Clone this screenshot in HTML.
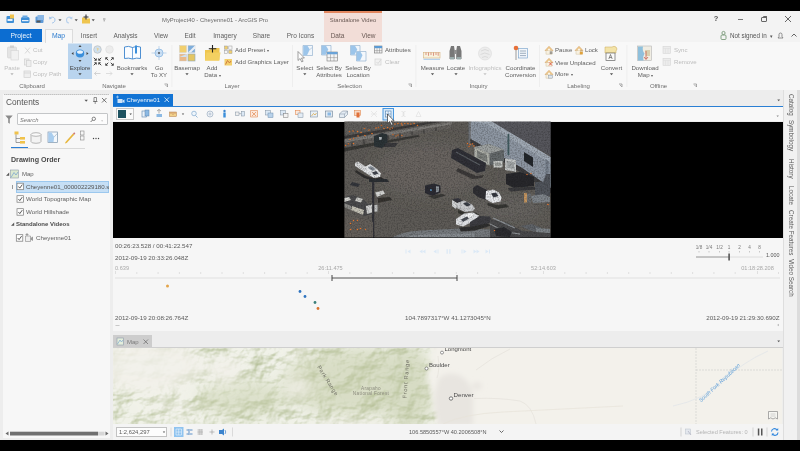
<!DOCTYPE html>
<html>
<head>
<meta charset="utf-8">
<title>ArcGIS Pro</title>
<style>
html,body{margin:0;padding:0;}
body{width:800px;height:451px;overflow:hidden;background:#000;position:relative;font-family:"Liberation Sans",sans-serif;color:#555;}
#wrap{position:absolute;left:-10px;top:-10px;width:820px;height:471px;background:#000;filter:blur(0.35px);}
#app{position:absolute;left:10px;top:10px;width:800px;height:451px;}
#bg{position:absolute;left:-10px;top:11px;width:820px;height:429px;background:#efefef;}
.t{position:absolute;white-space:nowrap;font-size:6.1px;line-height:8px;height:8px;margin-top:-4px;color:#606060;}
.c{transform:translateX(-50%);text-align:center;}
.dis{color:#bdbdbd !important;}
.a{position:absolute;}
.b{font-weight:bold;}
svg{position:absolute;overflow:visible;}
.car{position:absolute;font-size:4px;line-height:4px;color:#555;transform:translateX(-50%);}
</style>
</head>
<body>
<div id="wrap"><div id="app">
<div id="bg"></div>
<!-- ===== title bar ===== -->
<div class="a" style="left:0;top:11px;width:800px;height:31px;background:#f3f3f3;"></div>
<div class="a" style="left:0;top:42px;width:800px;height:47.500px;background:#f8f8f8;"></div>
<div class="a" style="left:0;top:89.500px;width:800px;height:0.800px;background:#dcdcdc;"></div>
<!-- context tab -->
<div class="a" style="left:324px;top:11px;width:58px;height:31px;background:#f2ddd7;"></div>
<div class="a" style="left:324px;top:11px;width:58px;height:1.5px;background:#e2875f;"></div>
<div class="t c" style="left:353px;top:20px;font-size:5.9px;color:#6a5a55;">Standalone Video</div>
<div class="t" style="left:162px;top:20px;font-size:5.9px;color:#6b6b6b;">MyProject40 - Cheyenne01 - ArcGIS Pro</div>
<!-- quick access icons -->
<svg style="left:0;top:11px;" width="120" height="18">
  <g>
    <rect x="6.5" y="5" width="7.5" height="7" rx="1" fill="#3f8fd6"/><rect x="10" y="3.5" width="4" height="4" fill="#f0c24b"/><rect x="7.5" y="8" width="5" height="2" fill="#e8f1fb"/>
    <rect x="21" y="6" width="8.5" height="6" rx="1.5" fill="#3f8fd6"/><rect x="22.5" y="4.5" width="5" height="2.5" fill="#6aa9e2"/><rect x="22" y="9" width="6.5" height="1.2" fill="#e8f1fb"/>
    <rect x="35.5" y="5.5" width="8" height="6.5" rx="1" fill="#5d9ad8"/><rect x="37.5" y="4" width="6.5" height="5" fill="#8bb7e4"/><rect x="36.5" y="9.5" width="4" height="2" fill="#555"/>
    <path d="M50 7 C52 5.5 55 6 55 9 C55 11 53 12 52 12" stroke="#a3c5ea" stroke-width="1" fill="none"/><path d="M49 5.5 L49.3 8.5 L52 7.5Z" fill="#a3c5ea"/>
    <path d="M71.500 7 C69.500 5.500 66.500 6 66.500 9 C66.500 11 68 12 69 12" stroke="#b9d2ee" stroke-width="1.1" fill="none"/><path d="M72.500 5.500 L72.200 8.500 L69.500 7.500Z" fill="#b9d2ee"/>
    <path d="M58.4 8.3 h3.200 l-1.600 2z M74.6 8.3 h3.200 l-1.600 2z M91.6 8.3 h3.200 l-1.600 2z" fill="#555"/>
    <path d="M82 6.500 h3 l1 1 h4 v5 h-8z" fill="#efc54f"/><path d="M86 3.500 v5 M83.500 6 h5" stroke="#333" stroke-width="1.100"/>
    <path d="M103 8 h2.500 M103.600 9.800 h1.300" stroke="#666" stroke-width="0.700"/>
  </g>
</svg>
<!-- window controls -->
<div class="t c" style="left:716px;top:18.500px;font-size:7.500px;color:#555;font-weight:bold;">?</div>
<div class="a" style="left:737.500px;top:18.500px;width:5.500px;height:1px;background:#777;"></div>
<div class="a" style="left:761px;top:16.500px;width:3.500px;height:3.500px;border:0.8px solid #666;border-radius:1px;"></div><div class="a" style="left:762.500px;top:15.500px;width:3.500px;height:3.500px;border-top:0.8px solid #666;border-right:0.8px solid #666;border-radius:1px;"></div>
<svg style="left:784px;top:15px;" width="8" height="8"><path d="M1 1 L7 7 M7 1 L1 7" stroke="#555" stroke-width="0.9"/></svg>
<!-- tabs -->
<div class="a" style="left:0;top:29px;width:42px;height:12.500px;background:#0c6dd1;"></div>
<div class="t c" style="left:21px;top:36px;font-size:6.8px;color:#eaf3fc;">Project</div>
<div class="a" style="left:44.500px;top:28.500px;width:28px;height:14px;background:#f8f8f8;border:0.800px solid #dcdcdc;border-bottom:none;box-sizing:border-box;"></div>
<div class="t c" style="left:58.500px;top:36px;font-size:6.8px;color:#2d7ccf;">Map</div>
<div class="t c" style="left:89px;top:36px;font-size:6.5px;">Insert</div>
<div class="t c" style="left:125.500px;top:36px;font-size:6.5px;">Analysis</div>
<div class="t c" style="left:161px;top:36px;font-size:6.5px;">View</div>
<div class="t c" style="left:190px;top:36px;font-size:6.5px;">Edit</div>
<div class="t c" style="left:225px;top:36px;font-size:6.5px;">Imagery</div>
<div class="t c" style="left:261.500px;top:36px;font-size:6.5px;">Share</div>
<div class="t c" style="left:300.500px;top:36px;font-size:6.5px;">Pro Icons</div>
<div class="t c" style="left:337.500px;top:36px;font-size:6.5px;color:#6a5a55;">Data</div>
<div class="t c" style="left:368.500px;top:36px;font-size:6.5px;color:#6a5a55;">View</div>
<!-- sign in -->
<svg style="left:719px;top:30px;" width="10" height="11"><circle cx="4.500" cy="3" r="1.600" fill="none" stroke="#6b8f6b" stroke-width="0.800"/><rect x="2" y="5" width="5" height="4.500" rx="1" fill="none" stroke="#6b8f6b" stroke-width="0.800"/></svg>
<div class="t" style="left:730px;top:35.500px;font-size:6.300px;color:#555;">Not signed in&nbsp;&nbsp;<span style="font-size:4.500px;">&#9662;</span></div>
<svg style="left:775px;top:30px;" width="24" height="11"><path d="M3 8 h5 l-1 -1.500 v-2 a1.500 1.500 0 0 0 -3 0 v2z" fill="none" stroke="#666" stroke-width="0.700"/><path d="M16.500 6.500 l2.500 -2.500 l2.500 2.500" fill="none" stroke="#555" stroke-width="0.900"/></svg>
<!-- ===== ribbon body ===== -->
<!-- Clipboard -->
<svg style="left:0;top:42px;" width="800" height="48">
  <!-- paste -->
  <rect x="7.500" y="5" width="9" height="11" rx="1" fill="#e4e4e4" stroke="#d2d2d2" stroke-width="0.600"/><rect x="10" y="3.500" width="4" height="2.500" fill="#d0d0d0"/><rect x="11" y="8.500" width="7.500" height="9.500" fill="#f1f1f1" stroke="#d4d4d4" stroke-width="0.600"/>
  <path d="M10.4 31.3 h3.200 l-1.600 2z" fill="#b5b5b5"/>
  <!-- cut/copy/path icons -->
  <path d="M25 5.500 l5 6 M30 5.500 l-5 6" stroke="#d0d0d0" stroke-width="0.800"/>
  <rect x="24.500" y="17" width="4.500" height="6" fill="#efefef" stroke="#d0d0d0" stroke-width="0.700"/><rect x="26.500" y="18.500" width="4.500" height="6" fill="#efefef" stroke="#d0d0d0" stroke-width="0.700"/>
  <rect x="24" y="29" width="6.500" height="6.500" fill="#efefef" stroke="#d0d0d0" stroke-width="0.700"/><path d="M24 31 h6.500" stroke="#d0d0d0" stroke-width="0.700"/>
  <!-- explore -->
  <rect x="68" y="1.500" width="24" height="35.500" fill="#b9d4ee"/>
  <ellipse cx="80" cy="11.500" rx="4.200" ry="4" fill="#3b8fdb"/><ellipse cx="80" cy="10" rx="3" ry="1.800" fill="#e9f3fc"/>
  <path d="M78.500 5 h3 l-1.500 -2z M78.500 18 h3 l-1.500 2z M73.500 10 v3 l-2 -1.500z M86.500 10 v3 l2 -1.500z" fill="#444"/>
  <path d="M78.4 31.3 h3.200 l-1.600 2z" fill="#444"/>
  <!-- navigate small icons -->
  <circle cx="97.500" cy="7.500" r="3.800" fill="#cfe0ee" stroke="#b5b5b5" stroke-width="0.600"/><path d="M96.500 5.500 l2.500 1 l-1.500 3z" fill="#e6cf9a"/>
  <circle cx="109.500" cy="7.500" r="3.800" fill="#ececec" stroke="#dcdcdc" stroke-width="0.600"/>
  <g stroke="#444" stroke-width="0.800" fill="none">
    <g transform="translate(97.500,19.500) scale(1.250) translate(-97.500,-19.500)"><path d="M94.500 16.500 l2 2 M96.500 17 v1.500 h-1.500 M100.500 16.500 l-2 2 M98.500 17 v1.500 h1.500 M94.500 22.500 l2 -2 M96.500 22 v-1.500 h-1.500 M100.500 22.500 l-2 -2 M98.500 22 v-1.500 h1.500"/></g>
    <g transform="translate(109.500,19.500) scale(1.250) translate(-109.500,-19.500)"><path d="M108.500 18.500 l-2 -2 M106.500 18 v-1.500 h1.500 M110.500 18.500 l2 -2 M112.500 18 v-1.500 h-1.500 M108.500 20.500 l-2 2 M106.500 21 v1.500 h1.500 M110.500 20.500 l2 2 M112.500 21 v1.500 h-1.500"/></g>
  </g>
  <path d="M100.500 31.500 h-6 m2 -2 l-2 2 l2 2" stroke="#c9c9c9" stroke-width="0.800" fill="none"/>
  <path d="M106 31.500 h6 m-2 -2 l2 2 l-2 2" stroke="#d5d5d5" stroke-width="0.800" fill="none"/>
  <!-- bookmarks -->
  <path d="M124.500 5 q4 -1.500 8 0.500 q4 -2 8 -0.500 v11.500 q-4 -1 -8 0.500 q-4 -1.500 -8 -0.500z" fill="#fafcff" stroke="#3b83cd" stroke-width="0.900"/><path d="M132.500 5.500 v11.500" stroke="#3b83cd" stroke-width="0.700"/><rect x="135" y="3.500" width="2" height="8" fill="#3b8fdb"/>
  <path d="M130.4 31.3 h3.200 l-1.600 2z" fill="#555"/>
  <!-- go to xy -->
  <circle cx="159" cy="11" r="4" fill="#cfe2f5" stroke="#7fb0df" stroke-width="0.700"/><path d="M159 4 v14 M151.500 11 h15" stroke="#a9c7e6" stroke-width="0.700"/><circle cx="159" cy="11" r="0.900" fill="#444"/>
  <!-- basemap -->
  <rect x="179.500" y="3.500" width="7" height="7" fill="#f1cf6e" stroke="#c9c9c9" stroke-width="0.400"/><rect x="188" y="3.500" width="7" height="7" fill="#7faedb" stroke="#c9c9c9" stroke-width="0.400"/><path d="M188 10.500 l7 -7 v3 l-4 4z" fill="#e8eef5"/>
  <rect x="179.500" y="12" width="7" height="7" fill="#e9b98a" stroke="#c9c9c9" stroke-width="0.400"/><path d="M179.500 15 l7 -3 v3z" fill="#cfe0f0"/><rect x="188" y="12" width="7" height="7" fill="#e4c663" stroke="#8aa6c0" stroke-width="0.600"/>
  <path d="M185.4 31.3 h3.200 l-1.600 2z" fill="#555"/>
  <!-- add data -->
  <path d="M205 8 h5 l1.500 -2 h8 v12.500 h-14.500z" fill="#efc64f"/><path d="M205 18.500 l1.500 -8 h14 l-1.500 8z" fill="#f3d061"/><path d="M212.500 3 v7.500 M208.800 6.800 h7.500" stroke="#222" stroke-width="1.100"/>
  <!-- add preset / graphics -->
  <rect x="224.500" y="4" width="3.200" height="3.200" fill="#f1cf6e" stroke="#999" stroke-width="0.500"/><rect x="228.800" y="4" width="3.200" height="3.200" fill="#f6f6f6" stroke="#999" stroke-width="0.500"/><rect x="224.500" y="8.300" width="3.200" height="3.200" fill="#f6f6f6" stroke="#999" stroke-width="0.500"/><rect x="228.800" y="8.300" width="3.200" height="3.200" fill="#f1cf6e" stroke="#999" stroke-width="0.500"/>
  <path d="M224.500 17 h7.500 v6.500 h-7.500z" fill="#f3cf6b"/><path d="M225.500 22.500 l2 -4 l2 2.500 l1.500 -2" stroke="#c66a3a" stroke-width="0.800" fill="none"/>
  <!-- select -->
  <path d="M303 3.500 h9.500 v10 h-9.500z" fill="#f1f6fb" stroke="#88a9c9" stroke-width="0.600"/><path d="M303.300 3.800 h4.200 l2.300 3.700 l-2.800 5.700 h-3.700z" fill="#9cc5ea"/><path d="M309.800 7.500 l2.500 -2" stroke="#88a9c9" stroke-width="0.500"/>
  <path d="M298 9.500 v9 l2.100 -2 l1.600 3.400 l1.400 -0.600 l-1.600 -3.300 h2.900z" fill="#fdfdfd" stroke="#666" stroke-width="0.600"/>
  <path d="M303.2 31.3 h3.200 l-1.600 2z" fill="#555"/>
  <!-- select by attributes -->
  <path d="M321.500 3.500 h9.500 v9.500 h-9.500z" fill="#f1f6fb" stroke="#88a9c9" stroke-width="0.600"/><path d="M321.800 3.800 h4.200 l2.300 3.700 l-2.800 5.200 h-3.700z" fill="#9cc5ea"/><rect x="327" y="10" width="10.500" height="9" fill="#f4f4f4" stroke="#7d7d7d" stroke-width="0.600"/><rect x="327" y="10" width="10.500" height="2.300" fill="#6aa3d8"/><path d="M330.500 12.300 v6.700 M334 12.300 v6.700 M327 15.600 h10.500" stroke="#8e8e8e" stroke-width="0.500"/>
  <!-- select by location -->
  <path d="M350.500 3.500 h9.500 v9.500 h-9.500z" fill="#f1f6fb" stroke="#88a9c9" stroke-width="0.600"/><path d="M350.800 3.800 h4.200 l2.300 3.700 l-2.800 5.200 h-3.700z" fill="#9cc5ea"/><path d="M356.500 9.500 h9.500 v9.500 h-9.500z" fill="#f4f8fc" stroke="#88a9c9" stroke-width="0.600"/><path d="M356.800 9.800 h3.700 l2 3.500 l-2.500 5.400 h-3.200z" fill="#9cc5ea"/>
  <!-- attributes / clear -->
  <rect x="374.500" y="4" width="7.500" height="7" fill="#f4f4f4" stroke="#777" stroke-width="0.600"/><rect x="374.500" y="4" width="7.500" height="2.200" fill="#5b9bd5"/><path d="M377 6.200 v4.800 M379.500 6.200 v4.800 M374.500 8.600 h7.500" stroke="#888" stroke-width="0.500"/>
  <rect x="375" y="17" width="6" height="6" fill="#f1f1f1" stroke="#d4d4d4" stroke-width="0.700"/><path d="M376.500 20 l1.500 1.500 l3 -4" stroke="#d0d0d0" stroke-width="0.700" fill="none"/>
  <!-- measure -->
  <rect x="423.500" y="10.500" width="16.500" height="5.500" fill="#f8f1dc" stroke="#d6b27e" stroke-width="0.600"/><path d="M426 10.500 v2.500 M428.500 10.500 v3.300 M431 10.500 v2.500 M433.500 10.500 v3.300 M436 10.500 v2.500 M438.200 10.500 v3.300" stroke="#c9574a" stroke-width="0.600"/><path d="M423.500 17.300 h16.500" stroke="#7fb2e2" stroke-width="0.700"/>
  <path d="M430.9 31.3 h3.200 l-1.600 2z" fill="#555"/>
  <!-- locate (binoculars) -->
  <path d="M449.500 9 l1.500 -5 h3 l0.800 5 v8 h-5.300z M461.500 9 l-1.500 -5 h-3 l-0.800 5 v8 h5.300z" fill="#787878"/><rect x="454" y="8" width="3" height="4" fill="#8f8f8f"/><rect x="450" y="15" width="4.300" height="2.500" fill="#9aa"/><rect x="456.700" y="15" width="4.300" height="2.500" fill="#9aa"/>
  <path d="M454.4 31.3 h3.200 l-1.600 2z" fill="#555"/><path d="M483.4 31.3 h3.200 l-1.600 2z" fill="#c4c4c4"/>
  <!-- infographics (disabled) -->
  <circle cx="485" cy="11.500" r="6.500" fill="#ececec" stroke="#dadada" stroke-width="0.600"/><path d="M481 9 q4 -3 8 0 M480.500 12.500 q4 -3 9 0 M482 15.500 q3 -2 6 0" stroke="#d2d2d2" stroke-width="0.700" fill="none"/>
  <!-- coordinate conversion -->
  <circle cx="516" cy="6" r="2.300" fill="#e6713a"/><path d="M516 8 v10" stroke="#777" stroke-width="0.700"/><rect x="518.500" y="6.500" width="9" height="9.500" fill="#f2f6fb" stroke="#6e9cc7" stroke-width="0.600"/><path d="M520 9 h6 M520 11.300 h6 M520 13.600 h6" stroke="#7d8fa5" stroke-width="0.700"/>
  <!-- labeling small icons -->
  <g>
   <path d="M545.0 8.5 l4 -4.200 l4 4.200z" fill="#ecc98f" stroke="#d79a55" stroke-width="0.500"/><rect x="546.0" y="8.5" width="6" height="3.600" fill="#f7f1e3" stroke="#c9b48a" stroke-width="0.400"/><rect x="548.0" y="6.8" width="2" height="1.700" fill="#f9f4e8"/><path d="M550.300 9.300 v2.800 M551.800 9.300 v2.800" stroke="#555" stroke-width="0.700"/>
   <path d="M545.0 20.5 l4 -4.200 l4 4.200z" fill="#ecc98f" stroke="#d79a55" stroke-width="0.500"/><rect x="546.0" y="20.5" width="6" height="3.600" fill="#f7f1e3" stroke="#c9b48a" stroke-width="0.400"/><rect x="548.0" y="18.8" width="2" height="1.700" fill="#f9f4e8"/><path d="M549 20.300 l3 3.200 M552 20.300 l-3 3.200" stroke="#e0452e" stroke-width="0.800"/>
   <path d="M545.0 32.5 l4 -4.200 l4 4.200z" fill="#ecc98f" stroke="#d79a55" stroke-width="0.500"/><rect x="546.0" y="32.5" width="6" height="3.600" fill="#f7f1e3" stroke="#c9b48a" stroke-width="0.400"/><rect x="548.0" y="30.8" width="2" height="1.700" fill="#f9f4e8"/><rect x="548.500" y="33.300" width="4" height="2.800" fill="#dfe6ee" stroke="#7f8fa0" stroke-width="0.400"/>
   <path d="M575.0 8.5 l4 -4.200 l4 4.200z" fill="#ecc98f" stroke="#d79a55" stroke-width="0.500"/><rect x="576.0" y="8.5" width="6" height="3.600" fill="#f7f1e3" stroke="#c9b48a" stroke-width="0.400"/><rect x="578.0" y="6.8" width="2" height="1.700" fill="#f9f4e8"/><rect x="579.800" y="9.800" width="3" height="2.600" fill="#e0a23c"/><path d="M580.500 9.800 v-0.800 a0.800 0.800 0 0 1 1.600 0 v0.800" stroke="#b9822e" stroke-width="0.400" fill="none"/>
  </g>
  <!-- convert -->
  <path d="M605 5 h7 q2 -1.500 4 0 q2 2 0 4 v2 h-11z" fill="#f3e3a8" stroke="#c9a85a" stroke-width="0.500"/><rect x="606" y="11" width="9" height="7.500" fill="#fafafa" stroke="#666" stroke-width="0.700"/><path d="M608.800 17 l1.700 -4.500 l1.700 4.500 M609.400 15.500 h2.200" stroke="#444" stroke-width="0.600" fill="none"/>
  <path d="M609.9 31.3 h3.200 l-1.600 2z" fill="#555"/>
  <!-- download map -->
  <rect x="637.500" y="4" width="14" height="14.500" fill="#f0ede3" stroke="#b5b5b5" stroke-width="0.600"/><path d="M638 4.500 h5 q-1 4 1.500 7 q-2 3 -1 7 h-5.500z" fill="#8fc0dc"/><path d="M645 8 h5 v6 h-4z" fill="#d9cfae"/><path d="M646 9 v8 M644 15 l2 2.500 l2 -2.500" stroke="#c24a3a" stroke-width="0.700" fill="none"/>
  <!-- sync / remove (disabled) -->
  <rect x="663" y="4.300" width="7.500" height="7" fill="#ececec" stroke="#d6d6d6" stroke-width="0.600"/><path d="M663 6.500 h7.500 M665.500 6.500 v4.800 M668 6.500 v4.800" stroke="#dcdcdc" stroke-width="0.500"/><rect x="663" y="16.300" width="7.500" height="7" fill="#ececec" stroke="#d6d6d6" stroke-width="0.600"/><path d="M663 18.500 h7.500 M665.500 18.500 v4.800 M668 18.500 v4.800" stroke="#dcdcdc" stroke-width="0.500"/>
  <!-- separators -->
  <g fill="#ebebeb"><rect x="171.500" y="3" width="0.800" height="42"/><rect x="292" y="3" width="0.800" height="42"/><rect x="415.500" y="3" width="0.800" height="42"/><rect x="539" y="3" width="0.800" height="42"/><rect x="626.500" y="3" width="0.800" height="42"/></g>
  <!-- launchers -->
  <g stroke="#777" stroke-width="0.600" fill="none"><path d="M164.500 42 h3 v3 M165.300 42.800 l2 2"/><path d="M408.500 42 h3 v3 M409.300 42.800 l2 2"/><path d="M619 42 h3 v3 M619.800 42.800 l2 2"/><path d="M693.500 42 h3 v3 M694.300 42.800 l2 2"/></g>
  <!-- collapse -->
</svg>
<div class="t c dis" style="left:12px;top:67.500px;">Paste</div>
<div class="t dis" style="left:33px;top:50px;">Cut</div>
<div class="t dis" style="left:33px;top:62px;">Copy</div>
<div class="t dis" style="left:33px;top:74px;">Copy Path</div>
<div class="t c" style="left:80px;top:67.500px;color:#444;">Explore</div>
<div class="t c" style="left:132px;top:67.500px;">Bookmarks</div>
<div class="t c" style="left:159px;top:67.500px;">Go</div>
<div class="t c" style="left:159px;top:75px;">To XY</div>
<div class="t c" style="left:187px;top:67.500px;">Basemap</div>
<div class="t c" style="left:212px;top:67.500px;">Add</div>
<div class="t c" style="left:212.500px;top:75px;">Data <span style="font-size:4px;">&#9662;</span></div>
<div class="t" style="left:235px;top:50px;">Add Preset <span style="font-size:4px;">&#9662;</span></div>
<div class="t" style="left:235px;top:62px;">Add Graphics Layer</div>
<div class="t c" style="left:304.800px;top:67.500px;">Select</div>
<div class="t c" style="left:329px;top:67.500px;">Select By</div>
<div class="t c" style="left:329px;top:75px;">Attributes</div>
<div class="t c" style="left:358px;top:67.500px;">Select By</div>
<div class="t c" style="left:358px;top:75px;">Location</div>
<div class="t" style="left:385px;top:50px;">Attributes</div>
<div class="t dis" style="left:385px;top:62px;">Clear</div>
<div class="t c" style="left:432.500px;top:67.500px;">Measure</div>
<div class="t c" style="left:456px;top:67.500px;">Locate</div>
<div class="t c dis" style="left:485px;top:67.500px;">Infographics</div>
<div class="t c" style="left:520.500px;top:67.500px;">Coordinate</div>
<div class="t c" style="left:520.500px;top:75px;">Conversion</div>
<div class="t" style="left:555px;top:50px;">Pause</div>
<div class="t" style="left:585px;top:50px;">Lock</div>
<div class="t" style="left:555px;top:62.500px;">View Unplaced</div>
<div class="t" style="left:555px;top:74px;">More <span style="font-size:4px;">&#9662;</span></div>
<div class="t c" style="left:611.500px;top:67.500px;">Convert</div>
<div class="t c" style="left:645px;top:67.500px;">Download</div>
<div class="t c" style="left:645.500px;top:75px;">Map <span style="font-size:4px;">&#9662;</span></div>
<div class="t dis" style="left:674px;top:50px;">Sync</div>
<div class="t dis" style="left:674px;top:62px;">Remove</div>
<!-- group labels -->
<div class="t c" style="left:32px;top:85.500px;font-size:6px;color:#6d6d6d;">Clipboard</div>
<div class="t c" style="left:114px;top:85.500px;font-size:6px;color:#6d6d6d;">Navigate</div>
<div class="t c" style="left:232px;top:85.500px;font-size:6px;color:#6d6d6d;">Layer</div>
<div class="t c" style="left:349.500px;top:85.500px;font-size:6px;color:#6d6d6d;">Selection</div>
<div class="t c" style="left:478.500px;top:85.500px;font-size:6px;color:#6d6d6d;">Inquiry</div>
<div class="t c" style="left:578.500px;top:85.500px;font-size:6px;color:#6d6d6d;">Labeling</div>
<div class="t c" style="left:658.500px;top:85.500px;font-size:6px;color:#6d6d6d;">Offline</div>
<!-- ===== below ribbon band ===== -->
<div class="a" style="left:0;top:90px;width:800px;height:350px;background:#ededed;"></div>
<!-- ===== contents pane ===== -->
<div class="a" style="left:3px;top:94px;width:106.500px;height:344px;background:#f7f7f7;"></div>
<div class="a" style="left:4px;top:94.300px;width:105px;height:1px;background:repeating-linear-gradient(90deg,#c2c2c2 0 1px,#d9d9d9 1px 2px);"></div>
<div class="t" style="left:6px;top:102px;font-size:8.300px;line-height:10px;height:10px;margin-top:-5px;color:#555;">Contents</div>
<svg style="left:80px;top:95px;" width="30" height="12">
  <path d="M4.500 4.800 h3.400 l-1.700 2z" fill="#555"/>
  <path d="M14 2.500 h2.500 v4 h-2.500z M13 6.500 h4.500 M15.200 6.500 v2.500" stroke="#666" stroke-width="0.700" fill="none"/>
  <path d="M22 3 l4.500 4.500 M26.500 3 l-4.500 4.500" stroke="#555" stroke-width="0.800"/>
</svg>
<!-- filter + search -->
<svg style="left:4px;top:113px;" width="12" height="13"><path d="M1.300 2.500 h7.400 l-2.900 3.300 v5 l-1.600 -1 v-4z" fill="#8a8a8a"/></svg>
<div class="a" style="left:17px;top:113.300px;width:90.500px;height:12px;background:#fcfcfc;border:0.800px solid #c4c6c8;box-sizing:border-box;border-radius:1px;"></div>
<div class="t" style="left:20px;top:119.500px;font-style:italic;color:#7a7a7a;font-size:5.800px;">Search</div>
<svg style="left:88px;top:114px;" width="18" height="11"><circle cx="5.800" cy="4.800" r="1.700" fill="none" stroke="#555" stroke-width="0.700"/><path d="M4.600 6 l-2 2" stroke="#555" stroke-width="0.800"/><path d="M13.200 6.500 h1.800 l-0.900 1.100z" fill="#999"/></svg>
<!-- icon row -->
<svg style="left:8px;top:128px;" width="100" height="22">
  <rect x="6.500" y="3.500" width="4" height="3" fill="#f0c24b"/><path d="M8 6.500 v8 h4 M8 10.500 h4" stroke="#777" stroke-width="0.700" fill="none"/><rect x="12" y="9" width="5" height="2.600" fill="#f0c24b"/><rect x="12" y="13" width="5" height="2.600" fill="#f0c24b"/>
  <path d="M23 6.500 v7 a5 1.800 0 0 0 10 0 v-7" fill="#f3f3f3" stroke="#9a9a9a" stroke-width="0.700"/><ellipse cx="28" cy="6.500" rx="5" ry="1.800" fill="#fafafa" stroke="#9a9a9a" stroke-width="0.700"/>
  <rect x="40" y="4" width="9.500" height="10.500" fill="#f4f8fc" stroke="#7d95ad" stroke-width="0.700"/><path d="M40.400 4.400 h3.200 l2.600 4.600 l-0.700 5.100 h-5.100z" fill="#a9cdee"/><path d="M46.200 9 l3 -3.500" stroke="#7d95ad" stroke-width="0.500"/>
  <path d="M57.500 14 l7.500 -8.500 l1.200 1.200 l-7.500 8.300 l-1.800 0.500z" fill="#e7b73e"/><path d="M65 5.500 l1.200 -1.300 l1.200 1.200 l-1.200 1.300z" fill="#c77"/>
  <rect x="72.500" y="3" width="3.500" height="4" fill="#f6f6f6" stroke="#8a8a8a" stroke-width="0.600"/><rect x="72.500" y="8" width="3.500" height="4" fill="#f6f6f6" stroke="#8a8a8a" stroke-width="0.600"/>
  <circle cx="85.500" cy="10.500" r="0.700" fill="#444"/><circle cx="88" cy="10.500" r="0.700" fill="#444"/><circle cx="90.500" cy="10.500" r="0.700" fill="#444"/>
</svg>
<div class="a" style="left:11px;top:147.500px;width:74px;height:0.800px;background:#d9d9d9;"></div>
<div class="a" style="left:11px;top:146.500px;width:16.500px;height:1.500px;background:#2b7fd6;"></div>
<div class="t b" style="left:11px;top:159.500px;font-size:7.100px;color:#4a4a4a;">Drawing Order</div>
<!-- map row -->
<svg style="left:4px;top:168px;" width="20" height="12"><path d="M5.200 4.500 v3.200 h-3.200z" fill="#555"/><rect x="6.500" y="2" width="8" height="8" fill="#dbe8cf" stroke="#8c9aa8" stroke-width="0.600"/><path d="M7 9.500 l3 -5 l2 2.500 l2 -3" stroke="#7ea6cf" stroke-width="0.800" fill="none"/></svg>
<div class="t" style="left:22px;top:174px;font-size:6px;">Map</div>
<!-- selected row -->
<div class="a" style="left:15.500px;top:180.500px;width:93.500px;height:12px;background:#c6dff5;border:0.700px solid #9cc8ee;box-sizing:border-box;"></div>
<div class="a" style="left:12px;top:184.500px;width:0.700px;height:4px;background:#999;"></div>
<svg style="left:16px;top:181px;" width="10" height="78">
  <g fill="#fdfdfd" stroke="#777" stroke-width="0.700"><rect x="1" y="2.200" width="6.500" height="6.500"/><rect x="1" y="14.700" width="6.500" height="6.500"/><rect x="1" y="27.700" width="6.500" height="6.500"/><rect x="0.300" y="53.700" width="6.500" height="6.500"/></g>
  <g fill="none" stroke="#333" stroke-width="0.800"><path d="M2.400 5.500 l1.400 1.600 l2.500 -3.500"/><path d="M2.400 18 l1.400 1.600 l2.500 -3.500"/><path d="M2.400 31 l1.400 1.600 l2.500 -3.500"/><path d="M1.700 57 l1.400 1.600 l2.500 -3.500"/></g>
</svg>
<div class="t" style="left:26px;top:186.500px;font-size:6.100px;width:83px;overflow:hidden;color:#555;">Cheyenne01_000002229180.sid</div>
<div class="t" style="left:26px;top:199px;font-size:6.200px;">World Topographic Map</div>
<div class="t" style="left:26px;top:212px;font-size:6.200px;">World Hillshade</div>
<svg style="left:9px;top:219px;" width="8" height="10"><path d="M5.200 3.500 v3.200 h-3.200z" fill="#555"/></svg>
<div class="t b" style="left:16px;top:224px;font-size:6px;color:#4a4a4a;">Standalone Videos</div>
<svg style="left:24px;top:232px;" width="12" height="12"><path d="M1.500 4 h5 v5.500 h-5z" fill="#eee" stroke="#888" stroke-width="0.600"/><path d="M6.500 6 l2.500 -1.500 v4.500 l-2.500 -1.500z" fill="#999"/><path d="M3 1 v3 M1.500 2.500 h3" stroke="#777" stroke-width="0.600"/></svg>
<div class="t" style="left:36px;top:238px;font-size:6.200px;">Cheyenne01</div>
<!-- bottom scrollbar -->
<svg style="left:3px;top:429px;" width="107" height="9"><path d="M2.500 4.500 l3 -2 v4z" fill="#6a6a6a"/><rect x="7" y="2.700" width="88" height="3.800" fill="#6f6f6f"/><rect x="95" y="2.700" width="6.500" height="3.800" fill="#d6d6d6"/><path d="M102.500 2.500 l3 2 l-3 2z" fill="#6a6a6a"/></svg>
<!-- ===== video view ===== -->
<div class="a" style="left:113px;top:94px;width:670px;height:12px;background:#ededed;"></div>
<div class="a" style="left:113px;top:93.800px;width:59.500px;height:12.200px;background:#1173d4;"></div>
<svg style="left:115px;top:95px;" width="12" height="10"><rect x="2.500" y="4" width="5" height="4" fill="#cfe3f7"/><path d="M7.500 5.500 l2 -1 v3.500 l-2 -1z" fill="#cfe3f7"/><path d="M2.500 0.500 v3 M1 2 h3" stroke="#cfe3f7" stroke-width="0.600"/></svg>
<div class="t" style="left:126.500px;top:100px;font-size:5.900px;color:#f2f8fe;">Cheyenne01</div>
<svg style="left:163px;top:96px;" width="8" height="8"><path d="M1.500 1.500 l4.500 4.500 M6 1.500 l-4.500 4.500" stroke="#e8f2fc" stroke-width="0.800"/></svg>
<div class="a" style="left:113px;top:105.500px;width:670px;height:1.200px;background:#2a7fd4;"></div>
<svg style="left:774px;top:96px;" width="10" height="8"><path d="M3.300 3.500 h2.800 l-1.400 1.700z" fill="#555"/></svg>
<!-- toolbar -->
<div class="a" style="left:113px;top:106.700px;width:670px;height:14.300px;background:#f8f8f8;"></div>
<div class="a" style="left:115.500px;top:108px;width:18px;height:12px;background:#fbfbfb;border:0.700px solid #c9c9c9;box-sizing:border-box;"></div>
<div class="a" style="left:117.500px;top:110px;width:8.500px;height:8px;background:#1d5260;"></div>
<svg style="left:113px;top:107px;" width="670" height="14">
  <path d="M16.500 6.500 h2.400 l-1.200 1.500z" fill="#444"/>
  <!-- icons -->
  <g>
   <rect x="29" y="4" width="4.500" height="6" fill="#eaf2fa" stroke="#5b84ad" stroke-width="0.600"/><rect x="32" y="3" width="4" height="6" fill="#8cb9e3" stroke="#5b84ad" stroke-width="0.500"/>
   <path d="M44 4 l2 -1.500 l2 1.500 M46 2.500 v4" stroke="#777" stroke-width="0.600" fill="none"/><rect x="43.500" y="7" width="5.500" height="3" fill="#8cb9e3"/>
   <rect x="56.500" y="5" width="7" height="4.500" fill="#f1d28a" stroke="#b27b4a" stroke-width="0.500"/><path d="M58 5 v2 M60 5 v3 M62 5 v2" stroke="#b0624a" stroke-width="0.500"/><path d="M68.800 6.500 h2.400 l-1.200 1.500z" fill="#555"/>
   <circle cx="81" cy="6.500" r="2.300" fill="#eef5fb" stroke="#7fa8cf" stroke-width="0.700"/><path d="M82.500 8.500 l2 2" stroke="#7fa8cf" stroke-width="0.800"/>
   <circle cx="97" cy="7" r="3" fill="#eef2f6" stroke="#8fa3b8" stroke-width="0.600"/><path d="M95.500 7 h3 M97 5.500 v3" stroke="#8fa3b8" stroke-width="0.500"/>
   <circle cx="111.500" cy="4" r="1.200" fill="#3b83cd"/><rect x="110.300" y="5.500" width="2.400" height="5" fill="#3b8fdb"/>
   <rect x="122.500" y="5" width="3.500" height="3.500" fill="#eee" stroke="#7f8fa0" stroke-width="0.500"/><path d="M126 6.700 h2.500" stroke="#7f8fa0" stroke-width="0.600"/><rect x="128.500" y="4.500" width="3" height="4.500" fill="#dbe8f5" stroke="#7f8fa0" stroke-width="0.500"/>
   <path d="M137.500 3.500 h7 v6.500 h-7z" fill="#fbe9dd" stroke="#e38a52" stroke-width="0.600"/><path d="M139 5 l4 4 M143 5 l-4 4" stroke="#e38a52" stroke-width="0.700"/>
   <rect x="152.500" y="3.500" width="5" height="4.500" fill="#dbe8f5" stroke="#7f8fa0" stroke-width="0.500"/><rect x="155" y="6" width="5" height="4.500" fill="#b9d2ea" stroke="#6e8eae" stroke-width="0.500"/>
   <rect x="167.500" y="3.500" width="5" height="4.500" fill="#dbe8f5" stroke="#7f8fa0" stroke-width="0.500"/><rect x="170.500" y="6.500" width="4.500" height="4" fill="#f2f2f2" stroke="#777" stroke-width="0.500"/>
   <rect x="182.500" y="3.500" width="4.500" height="4" fill="#fbe9dd" stroke="#e38a52" stroke-width="0.600"/><rect x="185" y="6" width="5" height="4.500" fill="#e3ecf5" stroke="#7f8fa0" stroke-width="0.500"/>
   <rect x="197.500" y="4" width="7" height="6" fill="#e8f0f8" stroke="#7f8fa0" stroke-width="0.600"/><path d="M198.500 9 l2 -2.500 l1.500 1.500 l1.500 -2" stroke="#d9a13a" stroke-width="0.700" fill="none"/>
   <rect x="212.500" y="4" width="7" height="6" fill="#e3ebf3" stroke="#6b7f94" stroke-width="0.600"/><rect x="214.500" y="5.500" width="3.500" height="3" fill="#8cb9e3"/>
   <path d="M226.500 7 l3 -3 h5 v3.500 l-3 3 h-5z" fill="#e4ecf4" stroke="#7f8fa0" stroke-width="0.600"/><path d="M226.500 7 h5 v3.500 M231.500 7 l3 -3" stroke="#7f8fa0" stroke-width="0.500" fill="none"/>
   <rect x="241.500" y="3.500" width="6" height="5" fill="#f6d9c5" stroke="#e38a52" stroke-width="0.600"/><rect x="243.500" y="5.500" width="3" height="5" fill="#e0703a"/>
   <path d="M258 4 l6 6 M264 4 l-6 6 M258 7 h6" stroke="#e3e3e3" stroke-width="0.800"/>
   <rect x="270" y="1.500" width="10.500" height="11.500" fill="#d6e8f8" stroke="#3b8fdb" stroke-width="0.900"/><rect x="272.500" y="4" width="5.500" height="6" fill="#f2f7fc" stroke="#4c7fb2" stroke-width="0.600"/><path d="M275.200 4 v6 M272.500 7 h5.500" stroke="#4c7fb2" stroke-width="0.500"/>
   <path d="M288.500 4.500 a2 2 0 1 1 0 5 M292.500 4.500 a2 2 0 1 0 0 5" stroke="#e0e0e0" stroke-width="0.900" fill="none"/>
   <path d="M303 9.500 l2.500 -5 l2.500 5z" fill="none" stroke="#e3e3e3" stroke-width="0.800"/>
  </g>
  <path d="M663.500 8.500 h2.400 l-1.200 1.400z" fill="#888"/>
</svg>
<!-- black video area -->
<div class="a" style="left:113px;top:121.500px;width:669.500px;height:116.500px;background:#000;"></div>
<svg style="left:0;top:0;" width="800" height="451" viewBox="0 0 800 451">
  <defs>
    <clipPath id="fc"><rect x="344.400" y="121.500" width="206.300" height="116"/></clipPath>
    <filter id="fb8" x="-30%" y="-30%" width="160%" height="160%"><feGaussianBlur stdDeviation="7"/></filter>
    <filter id="fb" x="-5%" y="-5%" width="110%" height="110%"><feGaussianBlur stdDeviation="0.550"/></filter>
    <filter id="fn" x="0" y="0" width="100%" height="100%" color-interpolation-filters="sRGB">
      <feTurbulence type="fractalNoise" baseFrequency="0.7" numOctaves="2" seed="4"/>
      <feColorMatrix type="matrix" values="0 0 0 0 0.100  0 0 0 0 0.100  0 0 0 0 0.100  1.100 0 0 0 -0.450"/>
    </filter>
    <filter id="fn2" x="0" y="0" width="100%" height="100%" color-interpolation-filters="sRGB">
      <feTurbulence type="fractalNoise" baseFrequency="0.6" numOctaves="2" seed="9"/>
      <feColorMatrix type="matrix" values="0 0 0 0 0.800  0 0 0 0 0.800  0 0 0 0 0.780  0 1.300 0 0 -0.620"/>
    </filter>
  </defs>
  <g clip-path="url(#fc)">
   <g filter="url(#fb)">
    <rect x="340" y="118" width="215" height="124" fill="#5d5a56"/>
    <!-- lighter centre ground -->
    <g filter="url(#fb8)"><ellipse cx="430" cy="170" rx="55" ry="28" fill="#67635f"/>
    <ellipse cx="505" cy="208" rx="40" ry="14" fill="#66635f"/></g>
    <!-- upper-left road with cones -->
    <path d="M340 118 h115 v4 L340 145z" fill="#5f5d5a"/>
    <path d="M340 136.500 L440 120 h12 L340 139.500z" fill="#3c3b3b"/>
    <path d="M340 140 L452 122 L452 124.500 L340 143.500z" fill="#7c7a77"/>
    <path d="M340 143.500 L452 124.500 L452 128 L340 148.500z" fill="#64615d"/>
    <path d="M352 141.500 v5 M364 139.500 v5 M388 135.500 v4.500 M400 133.500 v4.500 M412 131.500 v4 M424 129.500 v4 M436 127.500 v3.500" stroke="#403e3c" stroke-width="1.200"/>
    <path d="M340 148.500 L418 135 L420 136.500 L340 152.500z" fill="#383735"/>
    <!-- cones -->
    <g fill="#e8762c">
      <circle cx="349.500" cy="131.500" r="0.800"/><circle cx="353" cy="131" r="0.800"/><circle cx="357.500" cy="131.500" r="0.800"/><circle cx="361" cy="132.500" r="0.800"/><circle cx="364.500" cy="128.500" r="0.800"/><circle cx="369" cy="130" r="0.800"/><circle cx="372" cy="133.500" r="0.800"/><circle cx="365" cy="135.500" r="0.800"/><circle cx="358" cy="136" r="0.800"/><circle cx="353.500" cy="138.500" r="0.800"/><circle cx="350" cy="139.500" r="0.800"/><circle cx="348.500" cy="144" r="0.800"/><circle cx="353.500" cy="143.500" r="0.800"/><circle cx="345.500" cy="145.500" r="0.800"/>
      <circle cx="376" cy="128" r="0.800"/><circle cx="378.500" cy="127.500" r="0.800"/><circle cx="381.500" cy="125.500" r="0.800"/><circle cx="384" cy="128.500" r="0.800"/><circle cx="387.500" cy="127.500" r="0.800"/><circle cx="390" cy="129" r="0.800"/><circle cx="392.500" cy="128" r="0.800"/>
      <circle cx="395" cy="124" r="0.800"/><circle cx="398" cy="123.500" r="0.800"/><circle cx="401.500" cy="123.500" r="0.800"/><circle cx="405" cy="123.500" r="0.800"/><circle cx="408" cy="123.500" r="0.800"/><circle cx="411" cy="124" r="0.800"/><circle cx="414" cy="123.500" r="0.800"/><circle cx="417.500" cy="125.500" r="0.800"/><circle cx="402" cy="125" r="0.800"/>
      <circle cx="393" cy="134.500" r="0.700"/><circle cx="396" cy="136" r="0.700"/><circle cx="398" cy="135" r="0.700"/><circle cx="402" cy="135.500" r="0.700"/>
    </g>
    <!-- dark booth -->
    <path d="M374 136 l8 -3 l5.500 1.500 v11 l-6 2.500 l-7.500 -1.500z" fill="#2c3036"/><rect x="379" y="137" width="2.700" height="2.700" fill="#b9c0c4"/>
    <path d="M386 143 h12 l-3 4 h-12z" fill="#37373a"/>
    <!-- building -->
    <path d="M470.500 118 H487 L555 160 V191 L522 168 L470.500 139z" fill="#8d96a2"/>
    <path d="M470.500 118 H487 L555 160 V166 L487 124 L470.500 121z" fill="#a0a9b4"/>
    <path d="M486 118 H555 V159z" fill="#56565b"/>
    <path d="M524 152 l9 5.500 v9.500 l-9 -6z" fill="#24252b"/>
    <path d="M507.500 134 h1.800 v21 h-1.800z" fill="#3f5a5f"/>
    <path d="M545.500 159 l3 2 v26 l-3 -2z" fill="#737c88"/>
    <path d="M468.500 121.500 h1.500 v22 h-1.500z" fill="#6d7177"/>
    <!-- wall base shadow -->
    <path d="M470.500 139 L522 168 L555 191 V196 L520 172 L470.500 143z" fill="#3a3a3d"/>
    <!-- container -->
    <path d="M474.500 147 l14 -3 l15.500 5.500 v12 l-14 4 l-15.500 -6z" fill="#64686a"/>
    <path d="M474.500 147 l14 -3 l15.500 5.500 l-14.500 4z" fill="#9da1a0"/>
    <path d="M474.500 147 l15 6.500 v12 l-15 -6z" fill="#aeb0a9"/>
    <path d="M477 150.500 l10 4.500 v7 l-10 -4.500z" fill="#7c7f7c"/>
    <!-- white boxes -->
    <path d="M493.500 161 h9 v6.500 h-9z" fill="#cdd0cd"/><path d="M495 162.500 h6 v3.500 h-6z" fill="#9a9d9a"/>
    <path d="M505 158.500 l11 1.500 v12 l-11 -2z" fill="#c3c6c6"/><path d="M507 161 l7 1 v7 l-7 -1z" fill="#a3a7a8"/>
    <!-- dark trailer -->
    <path d="M452 150 l6 -2 l28 15 l-1 8 l-8 2 l-26 -15z" fill="#2d2f35"/>
    <path d="M456 152 l24 13" stroke="#5a5d63" stroke-width="1.200"/>
    <path d="M458 168 l18 8 l8 -1 l-2 3 l-10 1 l-16 -8z" fill="#3a3937"/>
    <g fill="#e8762c"><circle cx="467.500" cy="143.500" r="0.800"/><circle cx="470" cy="144.500" r="0.800"/><circle cx="472.500" cy="143.800" r="0.800"/><circle cx="469" cy="146.500" r="0.800"/><circle cx="474" cy="146" r="0.800"/></g>
    <!-- dark truck right -->
    <path d="M506 174 l14 -2 l14 5 v9 l-20 2 l-8 -4z" fill="#25272c"/>
    <path d="M508 188 l26 -1.500 l4 3 l-28 2z" fill="#39393a"/>
    <g fill="#e8762c"><circle cx="527" cy="174.500" r="0.700"/><circle cx="531" cy="173.500" r="0.700"/><circle cx="548" cy="204.500" r="0.800"/></g>
    <!-- right side objects -->
    <path d="M535 182 h8 l3 -8 h4 v22 h-15z" fill="#50535a"/>
    <rect x="524" y="193" width="3" height="9.500" fill="#c39560"/><rect x="527" y="193.500" width="4" height="9" fill="#6a6d70"/>
    <path d="M531 196 l12 -2 l7 3 v5 l-17 1z" fill="#7d8389"/>
    <!-- white truck upper-left -->
    <path d="M355 163 l3 -1.500 l9 6 l-2.500 4.500 l-9.500 -6z" fill="#d9dadb"/>
    <path d="M365 167 l5 -3 l7 5 l4 4.500 l-1 3.500 l-6 1 l-10 -6z" fill="#e4e6e8"/>
    <path d="M368 167.500 l3 -1.500 l4.500 3 l-3 2z" fill="#7f8790"/>
    <path d="M372 172.500 l4 -1.500 l2.500 2.500 l-4 1.500z" fill="#3d4148"/>
    <path d="M356 170 l10 6 l9 2.500 l6 -1.500 l3 2 l-8 2 l-12 -3 l-9 -6z" fill="#2f2e2d"/>
    <!-- centre dark car -->
    <path d="M425 185.500 l9 -2 l6.500 2 v7 l-8 3.500 l-7.500 -3z" fill="#2a2c33"/>
    <path d="M436 186 l3 0.500 v5 l-3 1z" fill="#8b9299"/><circle cx="431" cy="190" r="1" fill="#5a93c0"/>
    <path d="M428 196 l14 -2 l4 1.500 l-12 3.500z" fill="#383736"/>
    <!-- pole -->
    <path d="M372 182 h2.300 v58 h-2.300z" fill="#303137"/>
    <path d="M369 179 h18 l2 3 h-20z" fill="#2c2d33"/>
    <path d="M352 182 l8 2 l-2 3 l-8 -2z" fill="#33343a"/>
    <!-- white small car left-bottom -->
    <path d="M375 192.500 l8 -2 l2 3 l-8 3.500z" fill="#d5d6d4"/>
    <path d="M378 198 l12 -1 l2 3 l-14 3z" fill="#34332f"/>
    <!-- debris -->
    <path d="M344 197 l8 -2 l10 3 l6 6 l5 -1 v11 l-9 2 l-12 -6 l-8 -4z" fill="#4a4a4b"/>
    <path d="M344 198 l5 -1 l2 3 l-7 2z" fill="#d8d8d4"/>
    <path d="M357 197 l6 2 l-2 3.500 l-6 -1.500z" fill="#c9c9c5"/>
    <path d="M352 206 l12 4 l-1 5 l-12 -5z" fill="#c6c4b8"/>
    <path d="M366 206 l6 -1.500 v8 l-5 1.500z" fill="#d2d3d2"/><path d="M374.500 205 l3 -0.500 v7 l-3 0.500z" fill="#c4c6c6"/>
    <path d="M344 203 l7 3 v4 l-7 -3z" fill="#8b8b88"/>
    <!-- bottom-left dirt with cones -->
    <path d="M340 216 l20 2 l13 4 v20 h-33z" fill="#625d58"/>
    <g fill="#e8762c"><circle cx="350.500" cy="223.500" r="0.800"/><circle cx="353.500" cy="220.500" r="0.700"/><circle cx="357.500" cy="220.500" r="0.700"/><circle cx="350.500" cy="229.500" r="0.800"/><circle cx="357.500" cy="229.500" r="0.800"/><circle cx="360.500" cy="228.500" r="0.800"/><circle cx="365.500" cy="229.500" r="0.700"/></g>
    <!-- bottom gravel -->
    <path d="M386 242 q10 -10 35 -11.500 q20 -1 40 -2 l60 2 v12z" fill="#74797d"/>
    <path d="M395 242 q12 -7 30 -7.500 l50 -1 v9z" fill="#868b90"/>
    <!-- white truck right -->
    <path d="M473 188 l4 -3 l10 5 l-1 10 l-8 -3 l-5 -4z" fill="#2d2e33"/>
    <path d="M486 191 l7 -1.500 l6 3 l2.500 5 l-1 4 l-8 1.500 l-7 -4z" fill="#e9ebee"/>
    <path d="M491 193.500 l5 -1 l2.500 3.500 l-5 1.500z" fill="#343840"/>
    <path d="M488 203 l10 2 l8 -1 l3 3 l-12 2 l-10 -4z" fill="#363533"/>
    <!-- pickup -->
    <path d="M452 199.500 l6 -1.500 l5 3 l-6 2z" fill="#34363c"/>
    <path d="M452 200 l5 3 l-1 6 l-4 -3z" fill="#d4d6d8"/>
    <path d="M457 203 l7 -2.500 l8 4 l3 4 l-2 2.500 l-8 1 l-9 -4.500z" fill="#c9cbce"/>
    <path d="M463 203.500 l4 -1.500 l4 3 l-4 1.500z" fill="#393d45"/>
    <path d="M458 210 l10 3.500 l8 -1 l3 2.500 l-12 2 l-9 -4z" fill="#33322f"/>
    <!-- white car bottom -->
    <path d="M456 219 l8 -5.500 l9 -1 l6 3 l-4 5 l-12 6 l-7 -2z" fill="#dfe1e4"/>
    <path d="M465 214.500 l7 -1 l3 2 l-7 2.500z" fill="#f2f3f4"/>
    <path d="M461 219.500 l6 -3 l2 2 l-6 3.500z" fill="#474b53"/>
    <path d="M470 222 l10 -6 l10 0.500 l2 5 l-8 4 l-14 2z" fill="#3a3b40"/>
    <path d="M459 227.500 l14 -1 l14 -3 l4 2 l-16 5 l-14 1z" fill="#2f2e2d"/>
    <!-- junk pile bottom right -->
    <path d="M490 219 l18 4 l14 8 l30 2 v9 h-62z" fill="#4a4a4c"/>
    <path d="M493 218 l22 10" stroke="#8e9398" stroke-width="1.300"/>
    <path d="M490 224 l16 8 l14 2" stroke="#9a9fa3" stroke-width="1" fill="none"/>
    <path d="M494 229 l10 -2 l8 5 l-2 5 l-14 -1z" fill="#2a2b2f"/><circle cx="494.500" cy="230.500" r="0.700" fill="#e8762c"/>
    <path d="M520 226 l12 -2 l10 4 l-8 4z" fill="#5f6367"/>
    <path d="M536 228 l14 1 v4 l-14 -1z" fill="#7e8489"/>
   </g>
   <rect x="344" y="121" width="207" height="117" filter="url(#fn)" opacity="0.7"/>
   <rect x="344" y="121" width="207" height="117" filter="url(#fn2)" opacity="0.08"/>
  </g>
</svg>

<!-- cursor -->
<svg style="left:386px;top:113px;" width="10" height="14"><path d="M1.500 1 v9.500 l2.200 -2 l1.700 3.800 l1.500 -0.700 l-1.700 -3.600 h3z" fill="#fff" stroke="#333" stroke-width="0.700"/></svg>
<!-- playback panel -->
<div class="a" style="left:113px;top:238px;width:669.500px;height:93px;background:#f6f6f6;"></div>
<div class="t" style="left:115px;top:246px;font-size:6.200px;color:#5a5a5a;">00:26:23.528 / 00:41:22.547</div>
<div class="t" style="left:115px;top:257.500px;font-size:6.200px;color:#5a5a5a;">2012-09-19 20:33:26.048Z</div>
<div class="t" style="left:115px;top:267.500px;font-size:5.600px;color:#a8a8a8;">0.639</div>
<div class="t c" style="left:330.500px;top:267.500px;font-size:5.600px;color:#a8a8a8;">26:11.475</div>
<div class="t c" style="left:543.500px;top:267.500px;font-size:5.600px;color:#a8a8a8;">52:14.603</div>
<div class="t c" style="left:757.500px;top:267.500px;font-size:5.600px;color:#a8a8a8;">01:18:28.208</div>
<svg style="left:113px;top:240px;" width="670" height="90">
  <!-- transport (disabled) -->
  <g fill="#dce9f6">
    <path d="M292.500 9.500 h1 v4 h-1z M297.500 9.500 v4 l-3 -2z"/>
    <path d="M309.500 9.500 v4 l-3 -2z M312.500 9.500 v4 l-3 -2z"/>
    <path d="M323.500 9.500 v4 l-3 -2z M324.500 9.500 h1 v4 h-1z"/>
    <path d="M333.500 9.300 h1.300 v4.400 h-1.300z M336.200 9.300 h1.300 v4.400 h-1.300z"/>
    <path d="M348.500 9.500 h1 v4 h-1z M350.500 9.500 v4 l3 -2z"/>
    <path d="M360.500 9.500 v4 l3 -2z M363.500 9.500 v4 l3 -2z"/>
    <path d="M372.500 9.500 v4 l3 -2z M376 9.500 h1 v4 h-1z"/>
  </g>
  <!-- speed slider -->
  <path d="M583 17 h33" stroke="#8a8a8a" stroke-width="0.900"/><path d="M616 17 h34" stroke="#dadada" stroke-width="0.900"/><rect x="615.300" y="13.500" width="1.600" height="7" fill="#555"/>
  <g stroke="#999" stroke-width="0.500"><path d="M586 11 v1.500 M596 11 v1.500 M606.500 11 v1.500 M616 11 v1.500 M626.500 11 v1.500 M636.500 11 v1.500 M646.500 11 v1.500"/></g>
  <!-- timeline -->
  <path d="M2 38 h665" stroke="#dcdcdc" stroke-width="0.800"/>
  <g stroke="#c9c9c9" stroke-width="0.500" id="ticks"><path d="M2.500 31 v3 M23.800 32 v2 M45.100 32 v2 M66.400 32 v2 M87.700 32 v2 M109 32 v2 M130.300 32 v2 M151.600 32 v2 M172.900 32 v2 M194.200 32 v2 M215.500 31 v3 M236.800 32 v2 M258.100 32 v2 M279.400 32 v2 M300.700 32 v2 M322 32 v2 M343.300 32 v2 M364.600 32 v2 M385.900 32 v2 M407.200 32 v2 M430.500 31 v3 M451.800 32 v2 M473.100 32 v2 M494.400 32 v2 M515.700 32 v2 M537 32 v2 M558.300 32 v2 M579.600 32 v2 M600.900 32 v2 M622.200 32 v2 M644.500 31 v3 M665.500 32 v2"/></g>
  <path d="M219 38 h125" stroke="#5f5f5f" stroke-width="1"/><path d="M219 35 v6 M344 35 v6" stroke="#444" stroke-width="1"/>
  <!-- dots -->
  <circle cx="54.500" cy="46" r="1.500" fill="#e3a44a"/>
  <circle cx="187" cy="51.500" r="1.400" fill="#2f74c0"/><circle cx="192" cy="56.500" r="1.400" fill="#2f74c0"/><circle cx="202" cy="62.500" r="1.400" fill="#3a7f7a"/><circle cx="205" cy="68.500" r="1.400" fill="#d9732e"/>
  <path d="M2.500 85.500 h4" stroke="#aaa" stroke-width="0.600"/><path d="M664 85 l2 -1.200 v2.400z" fill="#bbb"/>
</svg>
<div class="t c" style="left:699px;top:248px;font-size:4.600px;color:#777;">1/8</div>
<div class="t c" style="left:709px;top:248px;font-size:4.600px;color:#777;">1/4</div>
<div class="t c" style="left:719.500px;top:248px;font-size:4.600px;color:#777;">1/2</div>
<div class="t c" style="left:729px;top:248px;font-size:4.600px;color:#777;">1</div>
<div class="t c" style="left:739.500px;top:248px;font-size:4.600px;color:#777;">2</div>
<div class="t c" style="left:749.500px;top:248px;font-size:4.600px;color:#777;">4</div>
<div class="t c" style="left:759.500px;top:248px;font-size:4.600px;color:#777;">8</div>
<div class="t" style="left:766px;top:255px;font-size:5.400px;color:#555;">1.000</div>
<div class="t" style="left:115px;top:318px;font-size:6.200px;color:#5a5a5a;">2012-09-19 20:08:26.764Z</div>
<div class="t" style="left:405px;top:318px;font-size:6.200px;color:#5a5a5a;">104.7897317&deg;W 41.1273045&deg;N</div>
<div class="t" style="right:20.500px;top:318px;font-size:6.200px;color:#5a5a5a;">2012-09-19 21:29:30.690Z</div>
<!-- right dock tabs -->
<div class="a" style="left:783px;top:90px;width:17px;height:350px;background:#f1f1f1;"></div>
<div class="a" style="left:783px;top:90px;width:0.800px;height:350px;background:#dedede;"></div>
<div class="a" style="left:796.500px;top:90px;width:3.500px;height:350px;background:#dcdcdc;"></div>
<div class="t" style="left:791px;top:93.500px;font-size:6.300px;transform-origin:0 0;transform:rotate(90deg) translateY(-4px);margin-top:0;color:#5a5a5a;">Catalog</div>
<div class="t" style="left:791px;top:120px;font-size:6.300px;transform-origin:0 0;transform:rotate(90deg) translateY(-4px);margin-top:0;color:#5a5a5a;">Symbology</div>
<div class="t" style="left:791px;top:158.500px;font-size:6.300px;transform-origin:0 0;transform:rotate(90deg) translateY(-4px);margin-top:0;color:#5a5a5a;">History</div>
<div class="t" style="left:791px;top:185.500px;font-size:6.300px;transform-origin:0 0;transform:rotate(90deg) translateY(-4px);margin-top:0;color:#5a5a5a;">Locate</div>
<div class="t" style="left:791px;top:209.500px;font-size:6.300px;transform-origin:0 0;transform:rotate(90deg) translateY(-4px);margin-top:0;color:#5a5a5a;">Create Features</div>
<div class="t" style="left:791px;top:259px;font-size:6.300px;transform-origin:0 0;transform:rotate(90deg) translateY(-4px);margin-top:0;color:#5a5a5a;">Video Search</div>
<!-- ===== map view ===== -->
<div class="a" style="left:113px;top:331px;width:669.500px;height:17px;background:#ededed;"></div>
<div class="a" style="left:113px;top:335.300px;width:39px;height:12.200px;background:#cdcdcd;"></div>
<svg style="left:116px;top:337px;" width="10" height="10"><rect x="1" y="1" width="6.500" height="7" fill="#e4eedc" stroke="#8c9aa8" stroke-width="0.600"/><path d="M1.500 7 l2.500 -4 l1.500 2 l1.500 -2" stroke="#7ea6cf" stroke-width="0.700" fill="none"/></svg>
<div class="t" style="left:127px;top:341.800px;font-size:6px;color:#7a7a7a;">Map</div>
<svg style="left:142.300px;top:338px;" width="8" height="8"><path d="M1.500 1.500 l4.500 4.500 M6 1.500 l-4.500 4.500" stroke="#666" stroke-width="0.700"/></svg>
<div class="a" style="left:113px;top:347.300px;width:669.500px;height:1px;background:#cfcfcf;"></div>
<svg style="left:774px;top:338px;" width="10" height="8"><path d="M3.300 2.500 h2.800 l-1.400 1.700z" fill="#555"/></svg>
<svg style="left:113px;top:348px;" width="669.500" height="76" viewBox="0 0 669.500 76">
  <defs>
    <filter id="terr" x="0" y="0" width="100%" height="100%" color-interpolation-filters="sRGB">
      <feTurbulence type="fractalNoise" baseFrequency="0.035 0.05" numOctaves="5" seed="11" result="n"/>
      <feDiffuseLighting in="n" surfaceScale="7" diffuseConstant="1.15" lighting-color="#ffffff" result="l"><feDistantLight azimuth="225" elevation="48"/></feDiffuseLighting>
      <feColorMatrix in="l" type="matrix" values="0.25 0 0 0 0.69  0 0.21 0 0 0.735  0 0.34 0 0 0.57  0 0 0 1 0" result="c"/>
      <feGaussianBlur in="c" stdDeviation="0.6"/>
    </filter>
    <filter id="bl6" x="-30%" y="-30%" width="160%" height="160%"><feGaussianBlur stdDeviation="7"/></filter>
    <filter id="bl3" x="-30%" y="-30%" width="160%" height="160%"><feGaussianBlur stdDeviation="2.500"/></filter>
    <mask id="mm" maskUnits="userSpaceOnUse" x="0" y="0" width="669.500" height="76">
      <g filter="url(#bl3)"><path d="M-20 -20 H322 L318 10 L314 25 L316 40 L322 55 L326 90 H-20z" fill="#fff"/></g>
      <g filter="url(#bl6)">
        <ellipse cx="35" cy="18" rx="55" ry="27" fill="#000" opacity="0.850"/>
        <ellipse cx="112" cy="22" rx="19" ry="14" fill="#000" opacity="0.800"/>
        <ellipse cx="185" cy="40" rx="13" ry="11" fill="#000" opacity="0.800"/>
        <ellipse cx="186" cy="2" rx="11" ry="7" fill="#000" opacity="0.650"/>
        <ellipse cx="60" cy="60" rx="30" ry="9" fill="#000" opacity="0.350"/>
        <ellipse cx="240" cy="80" rx="40" ry="9" fill="#000" opacity="0.600"/>
      </g>
    </mask>
    <clipPath id="mc"><rect x="0" y="0" width="669.500" height="76"/></clipPath>
  </defs>
  <g clip-path="url(#mc)">
  <rect x="0" y="0" width="669.500" height="76" fill="#f3f1eb"/>
  <g mask="url(#mm)">
    <rect x="0" y="0" width="340" height="76" fill="#e6e8da"/>
    <rect x="0" y="0" width="340" height="76" filter="url(#terr)"/>
    <g filter="url(#bl6)" opacity="0.500"><ellipse cx="245" cy="34" rx="75" ry="34" fill="#c3cba6"/><ellipse cx="295" cy="40" rx="26" ry="42" fill="#bfc8a2"/><ellipse cx="130" cy="50" rx="45" ry="18" fill="#cbd2b1"/></g>
  </g>
  <!-- denver urban -->
  <g filter="url(#bl3)"><path d="M326 30 q10 -8 22 -2 q10 6 12 20 v30 h-34 q-6 -20 -4 -34z" fill="#e8e5e0"/><ellipse cx="364" cy="38" rx="5" ry="4" fill="#e9e6e1"/></g>
  <path d="M363 22 q15 -12 34 -21 M361 50.500 q25 -1 46 2.500 q12 4 16 23 M325 8 q2 14 -1 22" stroke="#e2dfd8" stroke-width="0.600" fill="none"/>
  <!-- boundaries -->
  <path d="M583 0 v76 M583 22 h87" stroke="#cfcfcb" stroke-width="0.600" stroke-dasharray="2 1"/>
  <path d="M560 58 q30 -6 50 -25 t45 -30" stroke="#dfe4e8" stroke-width="0.700" fill="none"/>
  <path d="M330 76 q20 -10 60 -12 t120 -6" stroke="#e6e2d8" stroke-width="0.700" fill="none"/>
  <!-- cities -->
  <circle cx="329" cy="4.600" r="1.500" fill="#fff" stroke="#555" stroke-width="0.600"/>
  <circle cx="313.500" cy="20.500" r="1.500" fill="#fff" stroke="#555" stroke-width="0.600"/>
  <circle cx="338" cy="50.500" r="1.700" fill="#fff" stroke="#444" stroke-width="0.700"/>
  <g font-family="Liberation Sans, sans-serif" fill="#4a4a4a">
    <text x="331.500" y="3" font-size="6">Longmont</text>
    <text x="316" y="18.700" font-size="6">Boulder</text>
    <text x="340.500" y="49" font-size="6.200">Denver</text>
    <text x="0" y="0" font-size="5.600" letter-spacing="0.500" fill="#6f6f63" transform="translate(204,19) rotate(58)">Park Range</text>
    <text x="0" y="0" font-size="5.600" letter-spacing="0.750" fill="#6f6f63" transform="translate(293.500,50.500) rotate(-86)">Front Range</text>
    <text x="258" y="41.500" font-size="4.700" letter-spacing="0.300" fill="#8a8a7c" text-anchor="middle">Arapaho</text>
    <text x="258" y="47" font-size="4.700" letter-spacing="0.300" fill="#8a8a7c" text-anchor="middle">National Forest</text>
    <text x="0" y="0" font-size="5.300" font-style="italic" fill="#5f9fd8" transform="translate(588,54.500) rotate(-43)">South Fork Republican</text>
  </g>
  <!-- map note icon -->
  <path d="M655.500 63.500 h9 v7.500 l-2.200 -1.200 l-2.300 1.200 l-2.300 -1.200 l-2.200 1.200z" fill="#f6f6f2" stroke="#8a8a8a" stroke-width="0.700"/><path d="M657.500 66 h5 M657.500 68 h5" stroke="#aaa" stroke-width="0.500"/>
  </g>
</svg>
<!-- status bar -->
<div class="a" style="left:113px;top:424px;width:669.500px;height:16px;background:#f4f4f4;"></div>
<div class="a" style="left:116px;top:427px;width:51px;height:10px;background:#fdfdfd;border:0.700px solid #c2c2c2;box-sizing:border-box;"></div>
<div class="t" style="left:119px;top:432px;font-size:5.800px;color:#5a5a5a;">1:2,624,297</div>
<svg style="left:113px;top:425px;" width="670" height="14">
  <path d="M49.800 6.500 h2.400 l-1.200 1.500z" fill="#555"/>
  <path d="M58 2.500 v9 M119.500 2.500 v9" stroke="#cfcfcf" stroke-width="0.700"/>
  <rect x="61" y="2" width="9.500" height="10" fill="#8fc3ef"/><path d="M63 4 h5.500 v6 h-5.500z M65.700 4 v6 M63 7 h5.500" stroke="#eaf4fd" stroke-width="0.600" fill="none"/>
  <path d="M73.500 5 h2 M77 5 h2.500 M73.500 9 h2 M77 9 h2.500 M76 4 v6" stroke="#4c86c4" stroke-width="0.900"/>
  <rect x="84.500" y="4" width="5.500" height="6" fill="#d8d8d8"/><path d="M86.300 4 v6 M88.200 4 v6 M84.500 7 h5.500" stroke="#aaa" stroke-width="0.500"/>
  <path d="M99 4.500 v5 M96.500 7 h5" stroke="#999" stroke-width="0.600"/>
  <path d="M106 5 h3 l2 -1.500 v7 l-2 -1.500 h-3z" fill="#3b83cd"/><path d="M112 5 q1.500 2 0 4" stroke="#3b83cd" stroke-width="0.700" fill="none"/>
  <path d="M386.500 5.500 l2 2 l2 -2" stroke="#444" stroke-width="0.800" fill="none"/>
  <path d="M568 2.500 v9 M640 2.500 v9 M654 2.500 v9" stroke="#c4c4c4" stroke-width="0.700"/>
  <rect x="572.500" y="4" width="5" height="5" fill="#e4e8ee" stroke="#b8c0ca" stroke-width="0.500"/><path d="M575 6 l3 4" stroke="#aab" stroke-width="0.700"/>
  <rect x="644.800" y="3.500" width="1.500" height="7" fill="#555"/><rect x="648" y="3.500" width="1.500" height="7" fill="#555"/>
  <path d="M658.500 6.500 a3 3 0 0 1 5.500 -1.500 M665 7.500 a3 3 0 0 1 -5.500 1.500" stroke="#2f86dd" stroke-width="1.100" fill="none"/><path d="M662.800 5.500 h2.400 v-2.400z M661.200 8.500 h-2.400 v2.400z" fill="#2f86dd"/>
</svg>
<div class="t" style="left:409px;top:432px;font-size:5.600px;color:#5a5a5a;">106.5850557&deg;W 40.2006508&deg;N</div>
<div class="t" style="left:696px;top:432px;font-size:5.600px;color:#b5b5b5;">Selected Features: 0</div>
</div></div>
</body>
</html>
